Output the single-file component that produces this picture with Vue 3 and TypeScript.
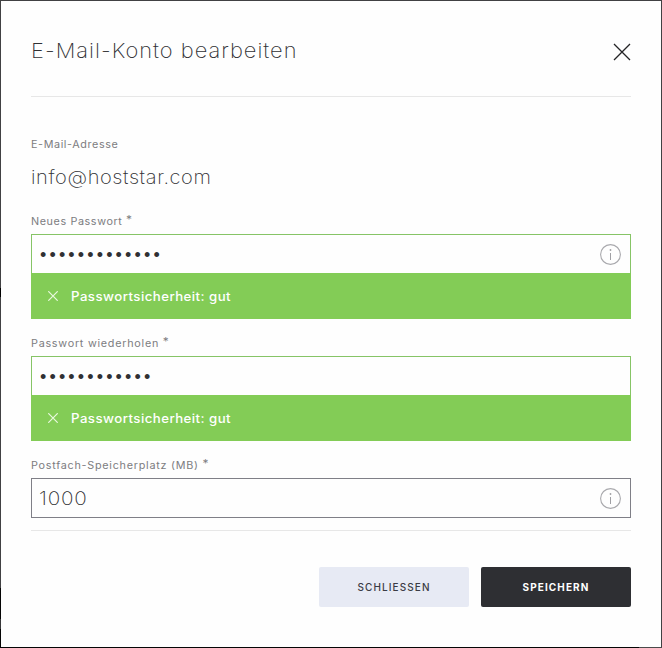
<script setup lang="ts">
import { ref } from 'vue'

interface Field {
  id: string
  label: string
  type: 'password' | 'text'
  value: string
  info: boolean
  strength?: string
}

const email = 'info@hoststar.com'
const fields = ref<Field[]>([
  { id: 'new', label: 'Neues Passwort', type: 'password', value: '•'.repeat(13), info: true, strength: 'Passwortsicherheit: gut' },
  { id: 'repeat', label: 'Passwort wiederholen', type: 'password', value: '•'.repeat(12), info: false, strength: 'Passwortsicherheit: gut' },
  { id: 'quota', label: 'Postfach-Speicherplatz (MB)', type: 'text', value: '1000', info: true },
])
</script>

<template>
  <div class="backdrop">
    <section class="dialog" role="dialog">
      <header class="header">
        <h1 class="title">E-Mail-Konto bearbeiten</h1>
        <button class="close" type="button">
          <svg width="18" height="18" viewBox="0 0 18 18"><path d="M1 1L17 17M17 1L1 17" stroke="#242426" stroke-width="1.3" fill="none" /></svg>
        </button>
      </header>

      <div class="address">
        <span class="label">E-Mail-Adresse</span>
        <span class="email">{{ email }}</span>
      </div>

      <div v-for="field in fields" :key="field.id" class="field" :class="{ good: field.strength }">
        <span class="label" :class="field.id">{{ field.label }} <span class="star">*</span></span>
        <div class="box">
          <span class="value" :class="field.type">{{ field.value }}</span>
          <svg v-if="field.info" class="info" width="21" height="21" viewBox="0 0 21 21">
            <circle cx="10.5" cy="10.5" r="9.9" fill="none" stroke="#a9a9ad" stroke-width="1.1" />
            <path d="M10.5 9V16" stroke="#a0a0a4" stroke-width="1" />
            <circle cx="10.5" cy="6" r="0.9" fill="#a0a0a4" />
          </svg>
        </div>
        <div v-if="field.strength" class="strength">
          <svg width="10" height="10" viewBox="0 0 10 10"><path d="M.3 .3L9.7 9.7M9.7 .3L.3 9.7" stroke="#e9f8df" stroke-width="1.2" fill="none" /></svg>
          <span class="message">{{ field.strength }}</span>
        </div>
      </div>

      <footer class="footer">
        <button class="button secondary" type="button">SCHLIESSEN</button>
        <button class="button primary" type="button">SPEICHERN</button>
      </footer>
    </section>
  </div>
</template>

<style>
body {
  margin: 0;
  overflow: hidden;
}
</style>

<style scoped>
.backdrop {
  box-sizing: border-box;
  width: 662px;
  height: 648px;
  padding: 1px;
  background:
    linear-gradient(90deg, #050505 639px, #4a4a4a 639px) 0 100% / 100% 1px no-repeat,
    linear-gradient(#414143 288px, #000 288px 297px, #414143 297px 588px, #050505 588px 619px, #38383a 619px 629px, #050505 629px) 0 0 / 1px 100% no-repeat,
    #414143;
  font-family: Inter, 'Liberation Sans', sans-serif;
}
.dialog {
  box-sizing: border-box;
  height: 646px;
  padding: 0 30px;
  background: #fefefe;
  color: #303033;
}
.header {
  box-sizing: border-box;
  display: flex;
  align-items: center;
  justify-content: space-between;
  height: 96px;
  padding-top: 6px;
  border-bottom: 1px solid #e7e7e7;
}
.title {
  margin: 0 0 2px;
  font-size: 20.5px;
  font-weight: 250;
  line-height: 28px;
  letter-spacing: 0.95px;
  white-space: nowrap;
  transform: scaleX(1.066);
  transform-origin: 0 50%;
}
.close {
  display: flex;
  padding: 0;
  border: 0;
  background: none;
}
.address {
  display: flex;
  flex-direction: column;
  height: 113px;
  padding-top: 39px;
  box-sizing: border-box;
}
.label {
  display: block;
  height: 16px;
  font-size: 10px;
  line-height: 16px;
  letter-spacing: 0.55px;
  color: #7c7c80;
  white-space: nowrap;
  transform: scaleX(1.08);
  transform-origin: 0 50%;
}
.label.repeat,
.label.quota {
  letter-spacing: 0.68px;
}
.star {
  font-size: 11px;
  line-height: 1;
  vertical-align: 2px;
}
.email {
  margin-top: 11px;
  font-size: 18.5px;
  font-weight: 250;
  line-height: 28px;
  letter-spacing: 0.55px;
  transform: scaleX(1.085);
  transform-origin: 0 50%;
}
.field {
  padding-top: 3px;
  margin-bottom: 13px;
}
.box {
  box-sizing: border-box;
  display: flex;
  align-items: center;
  justify-content: space-between;
  height: 40px;
  margin-top: 5px;
  padding: 0 9px 0 7px;
  border: 1px solid #7f7f87;
}
.good .box {
  height: 39px;
  border-color: #86c466;
  border-bottom: 0;
}
.info {
  margin-top: 1px;
}
.value {
  padding-top: 1px;
  font-size: 18.5px;
  font-weight: 250;
  line-height: 37px;
  letter-spacing: 0.7px;
  transform: scaleX(1.12);
  transform-origin: 0 50%;
}
.value.password {
  padding: 2px 0 0 1px;
  font-family: 'Liberation Sans', sans-serif;
  font-size: 18px;
  font-weight: 400;
  line-height: 36px;
  letter-spacing: 3.15px;
  transform: none;
}
.strength {
  display: flex;
  align-items: center;
  gap: 13px;
  height: 46px;
  padding-left: 17px;
  background: #83cc56;
  color: #fff;
}
.message {
  font-size: 12.5px;
  font-weight: 500;
  letter-spacing: 0.42px;
  transform: scaleX(1.06);
  transform-origin: 0 50%;
}
.footer {
  display: flex;
  justify-content: flex-end;
  gap: 12px;
  margin-top: -1px;
  padding-top: 36px;
  border-top: 1px solid #e7e7e7;
}
.button {
  width: 150px;
  height: 40px;
  padding: 0 0 1px;
  border: 0;
  border-radius: 2px;
  font-family: inherit;
  font-size: 10px;
  letter-spacing: 1.1px;
}
.secondary {
  background: #e7eaf4;
  color: #3b3c44;
  font-weight: 500;
}
.primary {
  background: #2e2f33;
  color: #fff;
  font-weight: 700;
}
</style>
